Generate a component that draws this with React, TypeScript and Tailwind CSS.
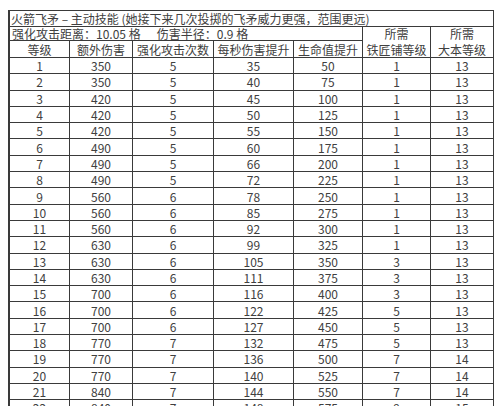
import React from "react";

const rows: (string | number)[][] = [
  [1, 350, 5, 35, 50, 1, 13],
  [2, 350, 5, 40, 75, 1, 13],
  [3, 420, 5, 45, 100, 1, 13],
  [4, 420, 5, 50, 125, 1, 13],
  [5, 420, 5, 55, 150, 1, 13],
  [6, 490, 5, 60, 175, 1, 13],
  [7, 490, 5, 66, 200, 1, 13],
  [8, 490, 5, 72, 225, 1, 13],
  [9, 560, 6, 78, 250, 1, 13],
  [10, 560, 6, 85, 275, 1, 13],
  [11, 560, 6, 92, 300, 1, 13],
  [12, 630, 6, 99, 325, 1, 13],
  [13, 630, 6, 105, 350, 3, 13],
  [14, 630, 6, 111, 375, 3, 13],
  [15, 700, 6, 116, 400, 3, 13],
  [16, 700, 6, 122, 425, 5, 13],
  [17, 700, 6, 127, 450, 5, 13],
  [18, 770, 7, 132, 475, 5, 13],
  [19, 770, 7, 136, 500, 7, 14],
  [20, 770, 7, 140, 525, 7, 14],
  [21, 840, 7, 144, 550, 7, 14],
  [22, 840, 7, 148, 575, 9, 15],
];

const headers = ["等级", "额外伤害", "强化攻击次数", "每秒伤害提升", "生命值提升"];

const cell = "border-r border-b border-[#3a3a3a] flex items-center justify-center";

export default function App() {
  return (
    <div
      className="w-[500px] h-[406px] overflow-hidden bg-white text-[12px] text-[#404040] leading-none"
      style={{ fontFamily: '"Noto Sans CJK SC", "Noto Sans", sans-serif' }}
    >
      <div className="ml-[8px] mt-[10px] w-[486px] border-l-2 border-t border-[#3a3a3a] grid grid-cols-[60px_63px_81px_80px_69px_68px_63px] grid-rows-[16px_14px_17px_repeat(22,16.3px)]">
        <div className="col-span-7 border-r border-b border-[#3a3a3a] flex items-center pl-[1px] pt-[1px] whitespace-pre">
          火箭飞矛 – 主动技能 (她接下来几次投掷的飞矛威力更强，范围更远)
        </div>
        <div className="col-span-5 border-r border-b border-[#3a3a3a] flex items-center pl-[2px] pt-[1px] whitespace-pre">
          {"强化攻击距离：10.05 格      伤害半径：0.9 格"}
        </div>
        <div className={`row-span-2 flex-col leading-[16px] ${cell}`}>
          <span>所需</span>
          <span>铁匠铺等级</span>
        </div>
        <div className={`row-span-2 flex-col leading-[16px] ${cell}`}>
          <span>所需</span>
          <span>大本等级</span>
        </div>
        {headers.map((h) => (
          <div key={h} className={`${cell} pt-[1px]`}>
            {h}
          </div>
        ))}
        {rows.map((r) =>
          r.map((v, i) => (
            <div key={`${r[0]}-${i}`} className={`${cell} overflow-hidden pt-[1px]`}>
              {v}
            </div>
          ))
        )}
      </div>
    </div>
  );
}
